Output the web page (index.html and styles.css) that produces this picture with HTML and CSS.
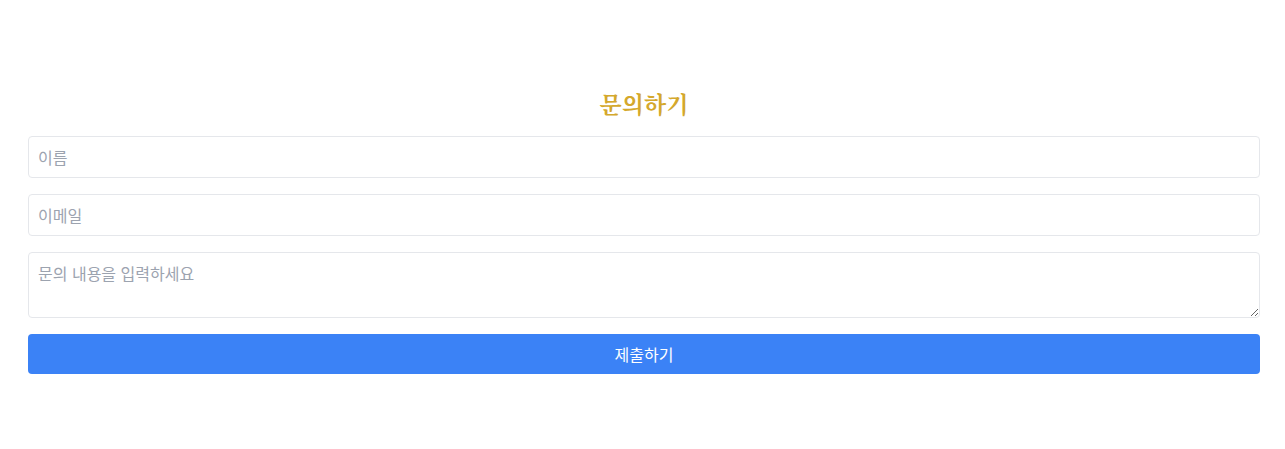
FILE: index.html
```html
<!DOCTYPE html>
<html lang="ko">
<head>
    <meta charset="UTF-8">
    <meta name="viewport" content="width=device-width, initial-scale=1.0">
    <title>문의하기</title>
    <link rel="stylesheet" href="styles.css">
</head>
<body>
    <div class="container">
        <h1 class="title">문의하기</h1>
        <form class="contact-form">
            <input type="text" class="field" placeholder="이름">
            <input type="email" class="field" placeholder="이메일">
            <textarea class="field message" placeholder="문의 내용을 입력하세요"></textarea>
            <button type="submit" class="submit">제출하기</button>
        </form>
    </div>
</body>
</html>
```

FILE: styles.css
```css
body {
    margin: 0;
    background-color: #ffffff;
    font-family: "Noto Sans CJK KR", "Noto Sans", sans-serif;
}

.container {
    padding: 86px 25px 0 28px;
}

.title {
    margin: 0 0 14px;
    text-align: center;
    font-family: "Noto Serif CJK KR", "Noto Sans CJK KR", serif;
    font-size: 23px;
    line-height: 36px;
    font-weight: bold;
    color: #d4a82c;
}

.contact-form {
    display: flex;
    flex-direction: column;
    gap: 16px;
}

.field {
    display: block;
    width: 100%;
    box-sizing: border-box;
    height: 42px;
    padding: 8px 9px;
    border: 1px solid #e5e7eb;
    border-radius: 4px;
    font-family: "Noto Sans CJK KR", "Noto Sans", sans-serif;
    font-size: 16px;
    line-height: 24px;
    color: #333333;
    outline: none;
}

.field::placeholder {
    color: #9ca3af;
}

.message {
    height: 66px;
    resize: vertical;
}

.submit {
    height: 40px;
    border: none;
    border-radius: 4px;
    background-color: #3b82f6;
    color: #ffffff;
    font-family: "Noto Sans CJK KR", "Noto Sans", sans-serif;
    font-size: 16px;
    cursor: pointer;
}

.submit:hover {
    background-color: #2563eb;
}
```
